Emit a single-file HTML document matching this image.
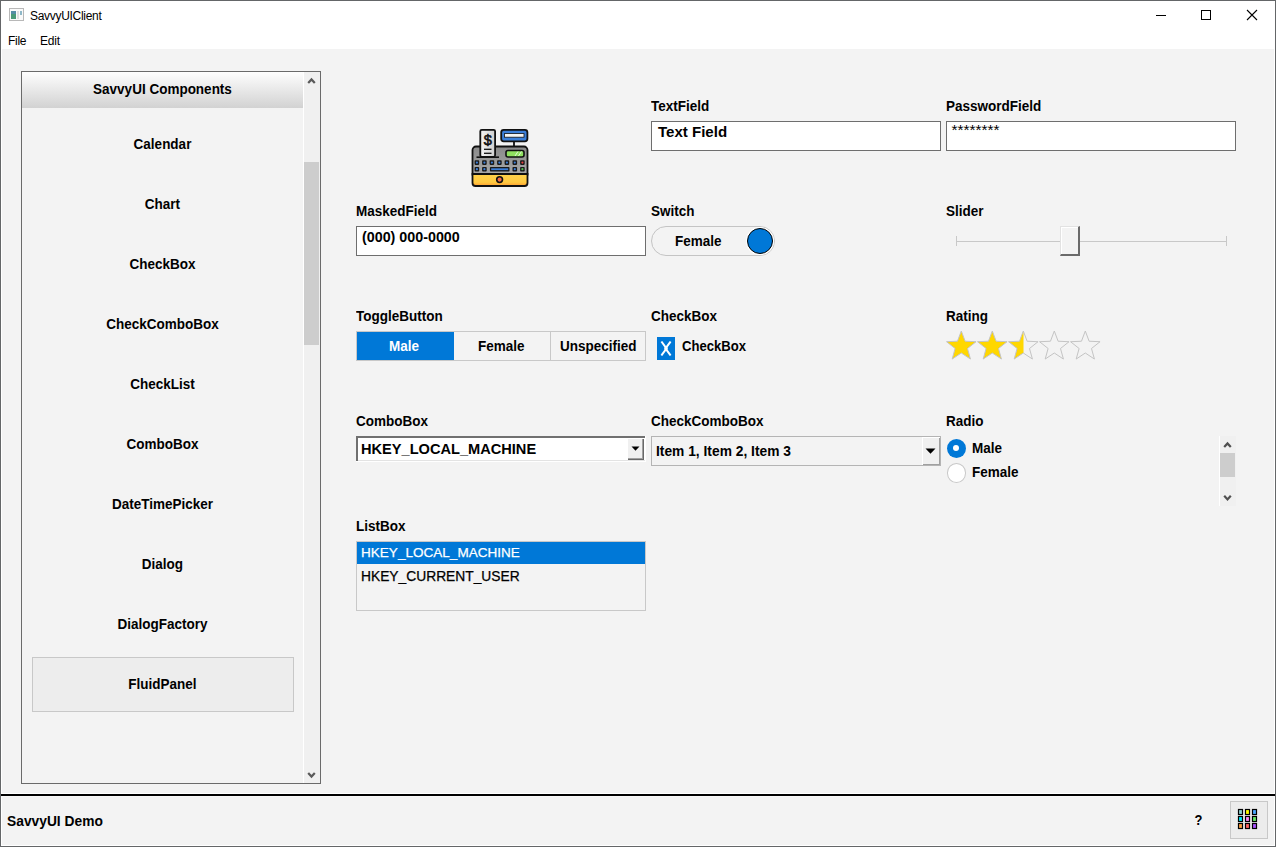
<!DOCTYPE html>
<html><head><meta charset="utf-8">
<style>
*{box-sizing:border-box;margin:0;padding:0}
html,body{width:1276px;height:847px;overflow:hidden;background:#f3f3f3}
body{position:relative;font-family:"Liberation Sans",sans-serif;color:#000}
.a{position:absolute}
.t{position:absolute;white-space:nowrap;line-height:20px;font-size:13.5px;font-weight:bold;transform:scaleY(1.06);transform-origin:0 14px}
.s{transform:none}
.n{font-weight:normal;transform:none}
</style></head><body>
<!-- window frame -->
<div class="a" style="left:0;top:0;width:1276px;height:847px;border:1px solid #646668"></div>
<div class="a" style="left:1px;top:1px;width:1274px;height:48px;background:#fff"></div>
<div class="a" style="left:1px;top:49px;width:1px;height:797px;background:#fff"></div>
<div class="a" style="left:1274px;top:49px;width:1px;height:797px;background:#fff"></div>
<div class="a" style="left:1px;top:845px;width:1274px;height:1px;background:#fff"></div>

<!-- title bar -->
<svg class="a" style="left:9px;top:8px" width="15" height="13" viewBox="0 0 15 13">
<rect x="0.5" y="0.5" width="14" height="12" fill="#fafafa" stroke="#b8b8b8"/>
<rect x="2" y="3" width="5" height="8" fill="#4a9a78"/>
<rect x="2" y="3" width="5" height="3" fill="#5a88b8" opacity="0.7"/>
<rect x="8" y="3" width="2" height="8" fill="#dedede"/>
<rect x="11" y="3" width="2" height="4" fill="#8fb8c8"/>
</svg>
<div class="t n" style="left:30px;top:5.5px;font-size:12px;letter-spacing:-0.3px">SavvyUIClient</div>
<div class="a" style="left:1156px;top:15px;width:10px;height:1px;background:#000"></div>
<div class="a" style="left:1201px;top:10px;width:10px;height:10px;border:1px solid #000"></div>
<svg class="a" style="left:1246px;top:9px" width="12" height="12" viewBox="0 0 12 12"><path d="M1 1L11 11M11 1L1 11" stroke="#000" stroke-width="1.1"/></svg>

<!-- menu -->
<div class="t n" style="left:8px;top:31px;font-size:12px;letter-spacing:-0.3px">File</div>
<div class="t n" style="left:40px;top:31px;font-size:12px;letter-spacing:-0.2px">Edit</div>

<!-- left panel -->
<div class="a" style="left:21px;top:71px;width:300px;height:713px;border:1px solid #6a6a6a"></div>
<div class="a" style="left:22px;top:72px;width:281px;height:36px;background:linear-gradient(#fefefe,#d2d2d2)"></div>
<div class="t" style="left:22px;width:281px;text-align:center;top:80px">SavvyUI Components</div>
<div class="a" style="left:303px;top:72px;width:1px;height:711px;background:#fff"></div>
<div class="a" style="left:304px;top:72px;width:16px;height:711px;background:#f0f0f0"></div>
<div class="a" style="left:304px;top:162px;width:15px;height:183px;background:#cdcdcd"></div>
<svg class="a" style="left:307px;top:77px" width="9" height="8" viewBox="0 0 9 8"><path d="M1.2 6L4.5 2.4L7.8 6" fill="none" stroke="#5a5a5a" stroke-width="2.2"/></svg>
<svg class="a" style="left:307px;top:771px" width="9" height="8" viewBox="0 0 9 8"><path d="M1.2 2L4.5 5.6L7.8 2" fill="none" stroke="#5a5a5a" stroke-width="2.2"/></svg>
<div class="a" style="left:32px;top:657px;width:262px;height:55px;background:#ededed;border:1px solid #c8c8c8"></div>
<div class="t" style="left:22px;width:281px;text-align:center;top:135px">Calendar</div>
<div class="t" style="left:22px;width:281px;text-align:center;top:195px">Chart</div>
<div class="t" style="left:22px;width:281px;text-align:center;top:255px">CheckBox</div>
<div class="t" style="left:22px;width:281px;text-align:center;top:315px">CheckComboBox</div>
<div class="t" style="left:22px;width:281px;text-align:center;top:375px">CheckList</div>
<div class="t" style="left:22px;width:281px;text-align:center;top:435px">ComboBox</div>
<div class="t" style="left:22px;width:281px;text-align:center;top:495px">DateTimePicker</div>
<div class="t" style="left:22px;width:281px;text-align:center;top:555px">Dialog</div>
<div class="t" style="left:22px;width:281px;text-align:center;top:615px">DialogFactory</div>
<div class="t" style="left:22px;width:281px;text-align:center;top:675px">FluidPanel</div>
<!-- labels -->
<div class="t" style="left:356px;top:202px;">MaskedField</div>
<div class="t" style="left:651px;top:97px;">TextField</div>
<div class="t" style="left:946px;top:97px;">PasswordField</div>
<div class="t" style="left:651px;top:202px;">Switch</div>
<div class="t" style="left:946px;top:202px;">Slider</div>
<div class="t" style="left:356px;top:307px;">ToggleButton</div>
<div class="t" style="left:651px;top:307px;">CheckBox</div>
<div class="t" style="left:946px;top:307px;">Rating</div>
<div class="t" style="left:356px;top:412px;">ComboBox</div>
<div class="t" style="left:651px;top:412px;">CheckComboBox</div>
<div class="t" style="left:946px;top:412px;">Radio</div>
<div class="t" style="left:356px;top:517px;">ListBox</div>
<div class="a" style="left:651px;top:121px;width:290px;height:30px;background:#fff;border:1px solid #6e6e6e"></div>
<div class="t s" style="left:658px;top:122px;font-size:15.05px">Text Field</div>
<div class="a" style="left:946px;top:121px;width:290px;height:30px;background:#fff;border:1px solid #6e6e6e"></div>
<div class="t s" style="left:951.5px;top:120px;font-weight:normal;font-size:15.4px">********</div>
<div class="a" style="left:356px;top:226px;width:290px;height:30px;background:#fff;border:1px solid #6e6e6e"></div>
<div class="t s" style="left:362px;top:227px;font-size:14.3px">(000) 000-0000</div>
<div class="a" style="left:651px;top:226px;width:124px;height:30px;border-radius:15px;border:1px solid #c4c4c4;background:#f3f3f3"></div>
<div class="t" style="left:675px;top:232px;">Female</div>
<div class="a" style="left:747px;top:228px;width:26px;height:26px;border-radius:50%;background:#0078d7;border:1px solid #000;box-shadow:0 0 0 1px #fff"></div>
<div class="a" style="left:956px;top:241px;width:271px;height:1px;background:#c8c8c8"></div>
<div class="a" style="left:956px;top:236px;width:1px;height:10px;background:#c8c8c8"></div>
<div class="a" style="left:1226px;top:236px;width:1px;height:10px;background:#c8c8c8"></div>
<div class="a" style="left:1060px;top:226px;width:20px;height:30px;background:#f3f3f3;border-left:1px solid #e2e2e2;border-top:1px solid #e2e2e2;border-right:2px solid #6a6a6a;border-bottom:2px solid #6a6a6a;box-shadow:inset 1px 1px 0 #fff"></div>
<div class="a" style="left:356px;top:331px;width:290px;height:30px;border:1px solid #c8c8c8;background:#f3f3f3"></div>
<div class="a" style="left:357px;top:332px;width:97px;height:28px;background:#0078d7"></div>
<div class="a" style="left:550px;top:332px;width:1px;height:28px;background:#c8c8c8"></div>
<div class="t" style="left:389px;top:337px;color:#fff">Male</div>
<div class="t" style="left:478px;top:337px;">Female</div>
<div class="t" style="left:560px;top:337px;">Unspecified</div>
<div class="a" style="left:657px;top:337px;width:18px;height:23px;background:#0078d7"></div>
<svg class="a" style="left:657px;top:337px" width="18" height="23" viewBox="0 0 18 23"><path d="M5 5.3L9 10.8L13 5.3M5 17.7L9 12.2L13 17.7M8.2 11.5H9.8" fill="none" stroke="#fff" stroke-width="2" stroke-linecap="square"/></svg>
<div class="t" style="left:682px;top:337px;font-size:13.1px">CheckBox</div>
<svg class="a" style="left:940px;top:325px" width="170" height="40" viewBox="940 325 170 40">
<defs><clipPath id="half"><rect x="940" y="325" width="83.5" height="40"/></clipPath></defs>
<polygon points="961.30,331.00 965.13,341.23 976.04,341.71 967.49,348.51 970.41,359.04 961.30,353.01 952.19,359.04 955.11,348.51 946.56,341.71 957.47,341.23" fill="#ffd700" stroke="#c4c4c4" stroke-width="1"/>
<polygon points="992.30,331.00 996.13,341.23 1007.04,341.71 998.49,348.51 1001.41,359.04 992.30,353.01 983.19,359.04 986.11,348.51 977.56,341.71 988.47,341.23" fill="#ffd700" stroke="#c4c4c4" stroke-width="1"/>
<polygon points="1023.30,331.00 1027.13,341.23 1038.04,341.71 1029.49,348.51 1032.41,359.04 1023.30,353.01 1014.19,359.04 1017.11,348.51 1008.56,341.71 1019.47,341.23" fill="#ffd700" clip-path="url(#half)"/>
<polygon points="1023.30,331.00 1027.13,341.23 1038.04,341.71 1029.49,348.51 1032.41,359.04 1023.30,353.01 1014.19,359.04 1017.11,348.51 1008.56,341.71 1019.47,341.23" fill="none" stroke="#c4c4c4" stroke-width="1"/>
<polygon points="1054.30,331.00 1058.13,341.23 1069.04,341.71 1060.49,348.51 1063.41,359.04 1054.30,353.01 1045.19,359.04 1048.11,348.51 1039.56,341.71 1050.47,341.23" fill="none" stroke="#c4c4c4" stroke-width="1"/>
<polygon points="1085.30,331.00 1089.13,341.23 1100.04,341.71 1091.49,348.51 1094.41,359.04 1085.30,353.01 1076.19,359.04 1079.11,348.51 1070.56,341.71 1081.47,341.23" fill="none" stroke="#c4c4c4" stroke-width="1"/>
</svg>
<div class="a" style="left:356px;top:436px;width:290px;height:26px;background:#fff"></div>
<div class="a" style="left:356px;top:436px;width:289px;height:2px;background:#707070"></div>
<div class="a" style="left:356px;top:436px;width:2px;height:25px;background:#707070"></div>
<div class="a" style="left:358px;top:460px;width:287px;height:1px;background:#e3e3e3"></div>
<div class="a" style="left:627px;top:438px;width:17px;height:22px;background:#f0f0f0;border-top:1px solid #fff;border-left:1px solid #fff;box-shadow:inset -1px -1px 0 #696969,inset -2px -2px 0 #a0a0a0"></div>
<svg class="a" style="left:631px;top:446px" width="10" height="6" viewBox="0 0 10 6"><path d="M0.5 0.5H8.5L4.5 4.8Z" fill="#000"/></svg>
<div class="t s" style="left:361px;top:439px;font-size:14.6px">HKEY_LOCAL_MACHINE</div>
<div class="a" style="left:651px;top:436px;width:290px;height:30px;background:#f3f3f3;border:1px solid #b4b4b4"></div>
<div class="a" style="left:922px;top:437px;width:18px;height:28px;background:#f0f0f0;border-top:1px solid #fff;border-left:1px solid #fff;box-shadow:inset -1px -1px 0 #a0a0a0"></div>
<svg class="a" style="left:925px;top:448px" width="12" height="7" viewBox="0 0 12 7"><path d="M0.5 0.5H10.5L5.5 5.8Z" fill="#000"/></svg>
<div class="t" style="left:656px;top:442px;font-size:13.8px">Item 1, Item 2, Item 3</div>
<div class="a" style="left:946.5px;top:438.5px;width:19px;height:19px;border-radius:50%;background:#0078d7"></div>
<div class="a" style="left:953px;top:445px;width:6px;height:6px;border-radius:50%;background:#fff"></div>
<div class="t" style="left:972px;top:439px;">Male</div>
<div class="a" style="left:946.5px;top:462.5px;width:19.5px;height:20px;border-radius:50%;background:#fff;border:1px solid #c8c8c8"></div>
<div class="t" style="left:972px;top:463px;">Female</div>
<div class="a" style="left:1219px;top:436px;width:1px;height:70px;background:#fff"></div>
<div class="a" style="left:1220px;top:436px;width:16px;height:70px;background:#f0f0f0"></div>
<div class="a" style="left:1220px;top:453px;width:15px;height:24px;background:#cdcdcd"></div>
<svg class="a" style="left:1223px;top:441px" width="9" height="8" viewBox="0 0 9 8"><path d="M1.2 6L4.5 2.4L7.8 6" fill="none" stroke="#505050" stroke-width="2.2"/></svg>
<svg class="a" style="left:1223px;top:494px" width="9" height="8" viewBox="0 0 9 8"><path d="M1.2 1.8L4.5 5.4L7.8 1.8" fill="none" stroke="#505050" stroke-width="2.2"/></svg>
<div class="a" style="left:356px;top:541px;width:290px;height:70px;background:#f3f3f3;border:1px solid #c8c8c8"></div>
<div class="a" style="left:357px;top:542px;width:288px;height:22px;background:#0078d7"></div>
<div class="t s" style="left:361px;top:543px;font-weight:normal;color:#fff;font-size:13.55px;-webkit-text-stroke:0.25px #fff">HKEY_LOCAL_MACHINE</div>
<div class="t s" style="left:361px;top:567px;font-weight:normal;font-size:13.8px;-webkit-text-stroke:0.25px #000">HKEY_CURRENT_USER</div>
<div class="a" style="left:1px;top:793px;width:1274px;height:1px;background:#fff"></div>
<div class="a" style="left:1px;top:794px;width:1274px;height:2px;background:#000"></div>
<div class="a" style="left:1px;top:796px;width:1274px;height:1px;background:#f8f8f8"></div>
<div class="t" style="left:7px;top:812px;font-size:13.8px">SavvyUI Demo</div>
<div class="t" style="left:1194.5px;top:811px;font-size:13px">?</div>
<div class="a" style="left:1230px;top:801px;width:38px;height:38px;background:#ececec;border:1px solid #c8c8c8"></div>
<svg class="a" style="left:1237px;top:808px" width="22" height="22" viewBox="0 0 22 22">
<rect x="1.5" y="1.5" width="4" height="5" fill="#8fcfcf" stroke="#000" stroke-width="1.2"/>
<rect x="8.5" y="1.5" width="4" height="5" fill="#ffff00" stroke="#000" stroke-width="1.2"/>
<rect x="15.5" y="1.5" width="4" height="5" fill="#4aa8ff" stroke="#000" stroke-width="1.2"/>
<rect x="1.5" y="8.5" width="4" height="5" fill="#00e8ff" stroke="#000" stroke-width="1.2"/>
<rect x="8.5" y="8.5" width="4" height="5" fill="#ff8cff" stroke="#000" stroke-width="1.2"/>
<rect x="15.5" y="8.5" width="4" height="5" fill="#66ee66" stroke="#000" stroke-width="1.2"/>
<rect x="1.5" y="15.5" width="4" height="5" fill="#ffa040" stroke="#000" stroke-width="1.2"/>
<rect x="8.5" y="15.5" width="4" height="5" fill="#ff6464" stroke="#000" stroke-width="1.2"/>
<rect x="15.5" y="15.5" width="4" height="5" fill="#a850ff" stroke="#000" stroke-width="1.2"/>
</svg>
<!-- icon -->
<svg class="a" style="left:460px;top:120px" width="80" height="75" viewBox="0 0 80 75">
<defs>
<linearGradient id="bodyg" x1="0" y1="0" x2="0" y2="1"><stop offset="0" stop-color="#8a8a8a"/><stop offset="1" stop-color="#a8a8a8"/></linearGradient>
<linearGradient id="rcg" x1="0" y1="0" x2="1" y2="0"><stop offset="0" stop-color="#f4f4f4"/><stop offset="1" stop-color="#cfcfcf"/></linearGradient>
<linearGradient id="drg" x1="0" y1="0" x2="0" y2="1"><stop offset="0" stop-color="#ffd24a"/><stop offset="0.7" stop-color="#ffc840"/><stop offset="1" stop-color="#ff9a30"/></linearGradient>
</defs>
<path d="M12.5 54.5V30a3.5 3.5 0 0 1 3.5-3.5h48a3.5 3.5 0 0 1 3.5 3.5v24.5Z" fill="url(#bodyg)" stroke="#111" stroke-width="1.8"/>
<path d="M12.5 54V63a3 3 0 0 0 3 3h49a3 3 0 0 0 3-3V54Z" fill="url(#drg)" stroke="#111" stroke-width="1.8"/>
<circle cx="39.6" cy="59.6" r="2.9" fill="#f26b4a" stroke="#111" stroke-width="1.6"/>
<rect x="20.3" y="9.8" width="14.8" height="27" rx="1.5" fill="url(#rcg)" stroke="#111" stroke-width="1.8"/>
<line x1="16.5" y1="37.2" x2="39" y2="37.2" stroke="#111" stroke-width="1.6"/>
<text x="27.8" y="25" font-family="Liberation Sans" font-size="14.5" text-anchor="middle" fill="#111" stroke="#111" stroke-width="0.6">$</text>
<line x1="24" y1="29.3" x2="31.5" y2="29.3" stroke="#111" stroke-width="1.3"/>
<line x1="24" y1="33.3" x2="31.5" y2="33.3" stroke="#111" stroke-width="1.3"/>
<rect x="41.2" y="9.8" width="26.2" height="11.5" rx="2.5" fill="#3b7ed8" stroke="#111" stroke-width="1.8"/>
<rect x="44.5" y="13.6" width="19.5" height="3.6" fill="#f4f4f4" stroke="#111" stroke-width="0.8"/>
<line x1="54" y1="21.5" x2="54" y2="27" stroke="#111" stroke-width="1.8"/>
<rect x="46" y="30.5" width="18" height="6.5" rx="2" fill="#8fe060" stroke="#111" stroke-width="1.6"/>
<path d="M55 36L58 31.5M58.5 36L61.5 31.5" stroke="#e8ffe0" stroke-width="0.9"/>
<line x1="13" y1="53.8" x2="67" y2="53.8" stroke="#111" stroke-width="1.8"/>
<g fill="#1a1a1a">
<rect x="14.6" y="40.3" width="4.6" height="4.6" rx="0.8"/><rect x="22.1" y="40.3" width="4.6" height="4.6" rx="0.8"/><rect x="29.6" y="40.3" width="4.6" height="4.6" rx="0.8"/>
<rect x="37.1" y="40.3" width="4.6" height="4.6" rx="0.8"/><rect x="44.6" y="40.3" width="4.6" height="4.6" rx="0.8"/><rect x="52.5" y="40.3" width="4.6" height="4.6" rx="0.8"/>
<rect x="60.1" y="40.3" width="4.6" height="4.6" rx="0.8"/>
<rect x="14.6" y="46.9" width="4.6" height="4.6" rx="0.8"/><rect x="22.1" y="46.9" width="4.6" height="4.6" rx="0.8"/>
<rect x="29.9" y="46.9" width="19.6" height="4.6" rx="0.8"/>
<rect x="52.5" y="46.9" width="4.6" height="4.6" rx="0.8"/>
<rect x="60.1" y="46.9" width="4.6" height="4.6" rx="0.8"/>
</g>
<g fill="#3b7ed8">
<circle cx="16.9" cy="42.6" r="1.1"/><circle cx="24.4" cy="42.6" r="1.1"/><circle cx="31.9" cy="42.6" r="1.1"/><circle cx="39.4" cy="42.6" r="1.1"/><circle cx="46.9" cy="42.6" r="1.1"/><circle cx="54.8" cy="42.6" r="1.1"/>
<circle cx="62.4" cy="42.6" r="1.1" fill="#e84040"/>
<circle cx="16.9" cy="49.2" r="1.1"/><circle cx="24.4" cy="49.2" r="1.1"/><rect x="31.2" y="48.3" width="17" height="1.8"/><circle cx="54.8" cy="49.2" r="1.1"/>
<circle cx="62.4" cy="49.2" r="1.1" fill="#50c050"/>
</g>
</svg>
</body></html>
